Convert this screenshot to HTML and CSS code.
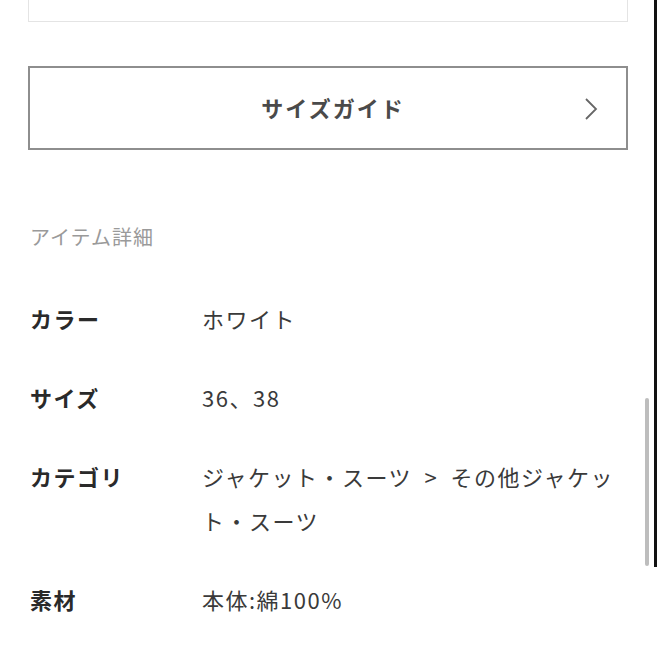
FILE: index.html
```html
<!DOCTYPE html>
<html lang="ja">
<head>
<meta charset="utf-8">
<link rel="stylesheet" href="styles.css">
</head>
<body>
<div class="page">
  <div class="top-box"></div>
  <a class="guide-btn">
    <span class="guide-label">サイズガイド</span>
    <svg class="chev" width="16" height="24" viewBox="0 0 16 24"><path d="M3 2 L13 12 L3 22" fill="none" stroke="#666" stroke-width="1.8"/></svg>
  </a>
  <h2 class="section-title">アイテム詳細</h2>
  <dl class="details">
    <dt>カラー</dt><dd>ホワイト</dd>
    <dt>サイズ</dt><dd>36、38</dd>
    <dt>カテゴリ</dt><dd class="wide">ジャケット・スーツ &gt; その他ジャケット・スーツ</dd>
    <dt>素材</dt><dd>本体:綿100%</dd>
  </dl>
</div>
<div class="edge"></div>
<div class="scroll-thumb"></div>
</body>
</html>
```

FILE: styles.css
```css
html, body {
  margin: 0;
  padding: 0;
  background: #fff;
}
body {
  font-family: "Noto Sans CJK JP", "Noto Sans", sans-serif;
  color: #333;
  width: 657px;
  height: 657px;
  overflow: hidden;
  position: relative;
}
.page {
  padding: 0 30px 0 28px;
  width: 600px;
}
.top-box {
  height: 22px;
  border: 1px solid #e4e4e4;
  border-top: none;
  box-sizing: border-box;
}
.guide-btn {
  margin-top: 44px;
  height: 84px;
  box-sizing: border-box;
  border: 2px solid #8e8e8e;
  display: flex;
  align-items: center;
  justify-content: center;
  padding-left: 10px;
  position: relative;
}
.guide-label {
  font-size: 22px;
  font-weight: 700;
  letter-spacing: 2px;
  color: #4a4a4a;
  line-height: 30px;
  margin-top: -2px;
}
.chev {
  position: absolute;
  right: 27px;
  top: 29px;
}
.section-title {
  margin: 72px 0 0 2px;
  font-size: 20px;
  font-weight: 400;
  letter-spacing: 1px;
  line-height: 30px;
  color: #9a9a9a;
}
.details {
  margin: 44px 0 0 2px;
  display: grid;
  grid-template-columns: 172px 425px;
  row-gap: 35px;
  font-size: 22px;
  line-height: 44px;
  letter-spacing: 1.5px;
}
.details dt {
  font-weight: 700;
  color: #2a2a2a;
  margin: 0;
}
.details dd {
  margin: 0;
  color: #3a3a3a;
}
.details dd.wide {
  word-spacing: 6px;
}
.edge {
  position: absolute;
  right: 0;
  top: 0;
  width: 3px;
  height: 567px;
  background: #111;
}
.scroll-thumb {
  position: absolute;
  right: 8px;
  top: 398px;
  width: 4px;
  height: 168px;
  background: #bdbdbd;
  border-radius: 2px;
}
```
